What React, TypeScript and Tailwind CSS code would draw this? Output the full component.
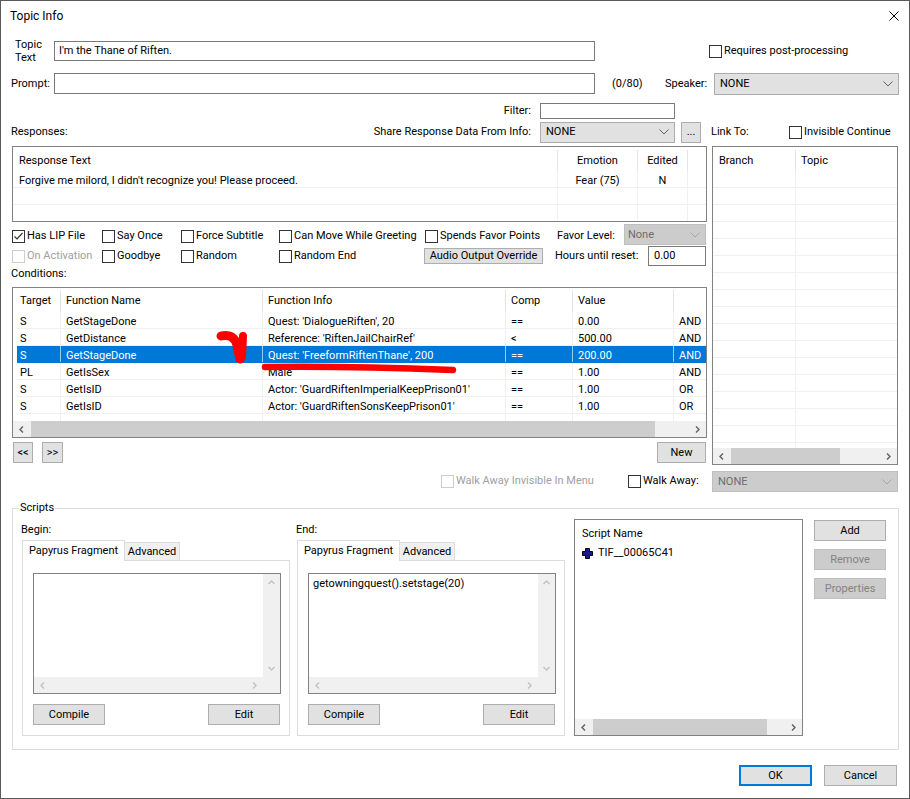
import React from 'react'

type Dir = 'up' | 'down' | 'left' | 'right'

function Arrow({ dir, color = '#606060' }: { dir: Dir; color?: string }) {
  const pts = {
    up: '1.5,6 4.5,3 7.5,6',
    down: '1.5,3 4.5,6 7.5,3',
    left: '6,1.5 3,4.5 6,7.5',
    right: '3,1.5 6,4.5 3,7.5',
  }[dir]
  return (
    <svg width="9" height="9" viewBox="0 0 9 9">
      <polyline points={pts} fill="none" stroke={color} strokeWidth="1.4" />
    </svg>
  )
}

function ComboArrow({ color }: { color: string }) {
  return (
    <svg width="10" height="6" viewBox="0 0 10 6" className="shrink-0">
      <polyline points="0.5,0.5 5,5 9.5,0.5" fill="none" stroke={color} strokeWidth="1" />
    </svg>
  )
}

function Check({ label, checked, disabled, className = '' }: { label: string; checked?: boolean; disabled?: boolean; className?: string }) {
  return (
    <div className={`flex items-center shrink-0 ${className}`}>
      <span
        className={`w-[13px] h-[13px] border bg-white flex items-center justify-center shrink-0 ${
          disabled ? 'border-[#cccccc]' : 'border-[#333333]'
        }`}
      >
        {checked && (
          <svg width="11" height="11" viewBox="0 0 11 11">
            <polyline points="1.5,5.5 4,8 9.5,2" fill="none" stroke="#333" strokeWidth="1.2" />
          </svg>
        )}
      </span>
      <span className={`ml-[2px] whitespace-nowrap ${disabled ? 'text-[#a0a0a0]' : ''}`}>{label}</span>
    </div>
  )
}

function Btn({ children, className = '', disabled, primary }: { children: React.ReactNode; className?: string; disabled?: boolean; primary?: boolean }) {
  const look = disabled
    ? 'border bg-[#cccccc] border-[#bfbfbf] text-[#838383]'
    : primary
    ? 'border-2 bg-[#e1e1e1] border-[#0078d7]'
    : 'border bg-[#e1e1e1] border-[#adadad]'
  return (
    <button type="button" className={`flex items-center justify-center shrink-0 whitespace-nowrap ${look} ${className}`}>
      {children}
    </button>
  )
}

function Combo({ value, className = '', disabled }: { value: string; className?: string; disabled?: boolean }) {
  return (
    <div
      className={`flex items-center border shrink-0 ${
        disabled ? 'bg-[#cccccc] border-[#bfbfbf] text-[#6d6d6d]' : 'bg-[#e1e1e1] border-[#adadad]'
      } ${className}`}
    >
      <span className="flex-1">{value}</span>
      <ComboArrow color={disabled ? '#a6a6a6' : '#606060'} />
    </div>
  )
}

function Field({ value = '', className = '' }: { value?: string; className?: string }) {
  return <div className={`flex items-center border border-[#7a7a7a] bg-white pl-[4px] shrink-0 ${className}`}>{value}</div>
}

function HScroll({ thumb, className = '', light }: { thumb?: string; className?: string; light?: boolean }) {
  const c = light ? '#c2c2c2' : '#606060'
  return (
    <div className={`flex h-[16px] bg-[#f0f0f0] shrink-0 ${className}`}>
      <div className="w-[17px] flex items-center justify-center">
        <Arrow dir="left" color={c} />
      </div>
      <div className="flex-1 flex">{thumb && <div className={`h-full bg-[#cdcdcd] ${thumb}`} />}</div>
      <div className="w-[17px] flex items-center justify-center">
        <Arrow dir="right" color={c} />
      </div>
    </div>
  )
}

function Plus() {
  return (
    <svg width="11" height="11" viewBox="0 0 11 11" className="shrink-0">
      <polygon
        points="3.5,0.5 7.5,0.5 7.5,3.5 10.5,3.5 10.5,7.5 7.5,7.5 7.5,10.5 3.5,10.5 3.5,7.5 0.5,7.5 0.5,3.5 3.5,3.5"
        fill="#1b1b86"
        stroke="#000"
        strokeWidth="1"
      />
    </svg>
  )
}

// script editor box with its (disabled) scroll bars
function ScriptBox({ text }: { text?: string }) {
  return (
    <div className="mt-[12px] ml-[10px] w-[248px] h-[121px] border border-[#828282] flex flex-col">
      <div className="flex-1 flex">
        <div className="flex-1 pl-[4px] pt-[3px] whitespace-nowrap">{text}</div>
        <div className="w-[17px] bg-[#f0f0f0] flex flex-col items-center justify-between py-[4px]">
          <Arrow dir="up" color="#c2c2c2" />
          <Arrow dir="down" color="#c2c2c2" />
        </div>
      </div>
      <div className="flex">
        <HScroll light className="flex-1" />
        <div className="w-[17px] h-[16px] bg-[#f0f0f0]" />
      </div>
    </div>
  )
}

function ScriptPanel({ label, text, className = '' }: { label: string; text?: string; className?: string }) {
  return (
    <div className={`w-[268px] shrink-0 ${className}`}>
      <div className="h-[21px] flex items-center -ml-[1px]">{label}</div>
      <div className="h-[20px] flex items-end">
        <div className="relative z-10 h-[21px] -mb-[1px] w-[103px] bg-white border border-b-0 border-[#dcdcdc] flex items-center justify-center pb-[1px]">
          Papyrus Fragment
        </div>
        <div className="h-[18px] w-[55px] bg-[#f0f0f0] border border-l-0 border-b-0 border-[#dcdcdc] flex items-center justify-center">
          Advanced
        </div>
      </div>
      <div className="h-[176px] border border-[#dcdcdc] bg-white">
        <ScriptBox text={text} />
        <div className="mt-[10px] pl-[10px] pr-[9px] flex justify-between">
          <Btn className="w-[72px] h-[21px]">Compile</Btn>
          <Btn className="w-[72px] h-[21px]">Edit</Btn>
        </div>
      </div>
    </div>
  )
}

const condCols = ['w-[44px] pl-[3px]', 'w-[202px] pl-[5px]', 'w-[243px] pl-[5px]', 'w-[67px] pl-[5px]', 'w-[101px] pl-[5px]', 'w-[32px] pl-[5px]']
const condHead = ['Target', 'Function Name', 'Function Info', 'Comp', 'Value', '']
const conditions = [
  ['S', 'GetStageDone', "Quest: 'DialogueRiften', 20", '==', '0.00', 'AND'],
  ['S', 'GetDistance', "Reference: 'RiftenJailChairRef'", '<', '500.00', 'AND'],
  ['S', 'GetStageDone', "Quest: 'FreeformRiftenThane', 200", '==', '200.00', 'AND'],
  ['PL', 'GetIsSex', 'Male', '==', '1.00', 'AND'],
  ['S', 'GetIsID', "Actor: 'GuardRiftenImperialKeepPrison01'", '==', '1.00', 'OR'],
  ['S', 'GetIsID', "Actor: 'GuardRiftenSonsKeepPrison01'", '==', '1.00', 'OR'],
]

export default function App() {
  return (
    <div className="w-[910px] h-[799px] bg-white relative overflow-hidden shadow-[inset_0_0_0_1px_#5a5a5a] font-[Roboto,sans-serif] text-[11px] leading-[14px] text-black select-none">
      {/* Title bar */}
      <div className="h-[31px] flex items-center pl-[10px]">
        <span className="text-[12px]">Topic Info</span>
        <svg className="ml-auto mr-[11px]" width="10" height="10" viewBox="0 0 10 10">
          <path d="M0.5 0.5 L9.5 9.5 M9.5 0.5 L0.5 9.5" stroke="#000" strokeWidth="1" />
        </svg>
      </div>

      {/* Topic text */}
      <div className="mt-[7px] h-[26px] flex items-center">
        <div className="ml-[15px] w-[39px] leading-[13px]">
          Topic
          <br />
          Text
        </div>
        <Field className="w-[541px] h-[20px]" value="I'm the Thane of Riften." />
        <Check className="ml-[114px]" label="Requires post-processing" />
      </div>

      {/* Prompt */}
      <div className="mt-[8px] h-[23px] flex items-center">
        <div className="ml-[11px] w-[43px]">Prompt:</div>
        <Field className="w-[541px] h-[21px]" />
        <div className="ml-[17px] w-[53px]">(0/80)</div>
        <div className="w-[49px]">Speaker:</div>
        <Combo className="w-[185px] h-[22px] pl-[5px] pr-[5px]" value="NONE" />
      </div>

      {/* Filter */}
      <div className="mt-[7px] h-[18px] flex items-center">
        <div className="w-[540px] pr-[9px] text-right">Filter:</div>
        <Field className="w-[135px] h-[16px]" />
      </div>

      {/* Responses header row */}
      <div className="mt-[1px] h-[22px] flex items-center">
        <div className="w-[540px] pl-[11px] pr-[9px] flex justify-between">
          <span>Responses:</span>
          <span>Share Response Data From Info:</span>
        </div>
        <Combo className="w-[135px] h-[21px] pl-[5px] pr-[5px]" value="NONE" />
        <Btn className="ml-[6px] w-[20px] h-[21px]">...</Btn>
        <div className="ml-[10px] w-[78px]">Link To:</div>
        <Check label="Invisible Continue" />
      </div>

      {/* Main area */}
      <div className="mt-[3px] pl-[12px] flex items-start">
        <div className="w-[695px] shrink-0">
          {/* Responses list */}
          <div className="h-[76px] border border-[#828282] overflow-hidden">
            <div className="h-[24px] flex pt-[3px]">
              <div className="w-[545px] pl-[6px] flex items-center border-r border-[#e5e5e5]">Response Text</div>
              <div className="w-[80px] flex items-center justify-center border-r border-[#e5e5e5]">Emotion</div>
              <div className="w-[50px] flex items-center justify-center border-r border-[#e5e5e5]">Edited</div>
            </div>
            {[0, 1, 2].map((i) => (
              <div key={i} className="h-[17px] flex border-b border-[#f0f0f0]">
                <div className="w-[545px] pl-[6px] pt-[4px] flex items-center border-r border-[#f0f0f0] whitespace-nowrap">
                  {i === 0 ? "Forgive me milord, I didn't recognize you! Please proceed." : ''}
                </div>
                <div className="w-[80px] pt-[4px] flex items-center justify-center border-r border-[#f0f0f0]">{i === 0 ? 'Fear (75)' : ''}</div>
                <div className="w-[50px] pt-[4px] flex items-center justify-center border-r border-[#f0f0f0]">{i === 0 ? 'N' : ''}</div>
              </div>
            ))}
          </div>

          {/* Flags */}
          <div className="mt-[4px] h-[20px] flex items-center">
            <Check className="w-[90px]" label="Has LIP File" checked />
            <Check className="w-[79px]" label="Say Once" />
            <Check className="w-[98px]" label="Force Subtitle" />
            <Check className="w-[146px]" label="Can Move While Greeting" />
            <Check className="w-[132px]" label="Spends Favor Points" />
            <div className="w-[67px]">Favor Level:</div>
            <Combo disabled className="w-[82px] h-[21px] pl-[3px] pr-[5px] -mt-[3px]" value="None" />
          </div>
          <div className="h-[20px] flex items-center">
            <Check className="w-[90px]" label="On Activation" disabled />
            <Check className="w-[79px]" label="Goodbye" />
            <Check className="w-[98px]" label="Random" />
            <Check className="w-[145px]" label="Random End" />
            <Btn className="w-[119px] h-[16px] leading-[12px]">Audio Output Override</Btn>
            <div className="ml-[12px] w-[93px]">Hours until reset:</div>
            <Field className="w-[58px] h-[20px] pl-[5px]" value="0.00" />
          </div>

          <div className="h-[16px] flex items-center -ml-[1px]">Conditions:</div>

          {/* Conditions list */}
          <div className="mt-[5px] h-[151px] border border-[#828282] flex flex-col overflow-hidden">
            <div className="h-[24px] flex pl-[4px] pt-[2px] shrink-0">
              {condHead.map((h, i) => (
                <div key={i} className={`${condCols[i]} flex items-center whitespace-nowrap ${i < 5 ? 'border-r border-[#e5e5e5]' : ''}`}>
                  {h}
                </div>
              ))}
            </div>
            {conditions.map((row, r) => {
              const sel = r === 2
              return (
                <div key={r} className="h-[17px] flex pl-[4px] shrink-0">
                  <div className={`flex flex-1 border-b ${sel ? 'bg-[#0078d7] text-white border-[#0078d7]' : 'border-[#f0f0f0]'}`}>
                    {row.map((c, i) => (
                      <div
                        key={i}
                        className={`${condCols[i]} pt-[4px] flex items-center whitespace-nowrap overflow-hidden ${
                          i < 5 ? (sel ? 'border-r border-[#9ccbf0]' : 'border-r border-[#f0f0f0]') : ''
                        }`}
                      >
                        {c}
                      </div>
                    ))}
                  </div>
                </div>
              )
            })}
            <div className="flex-1 flex pl-[4px]">
              {condCols.slice(0, 5).map((c, i) => (
                <div key={i} className={`${c} border-r border-[#f0f0f0]`} />
              ))}
            </div>
            <HScroll thumb="ml-[1px] w-[624px]" />
          </div>

          {/* Move / New buttons */}
          <div className="mt-[4px] h-[21px] flex items-center">
            <Btn className="ml-[1px] w-[20px] h-[21px]">&lt;&lt;</Btn>
            <Btn className="ml-[9px] w-[21px] h-[21px]">&gt;&gt;</Btn>
            <Btn className="ml-auto mr-[1px] w-[49px] h-[21px]">New</Btn>
          </div>

          {/* Walk away */}
          <div className="mt-[8px] h-[20px] flex items-center">
            <Check className="ml-[429px] w-[187px]" label="Walk Away Invisible In Menu" disabled />
            <Check label="Walk Away:" />
          </div>
        </div>

        <div className="ml-[5px] w-[186px] shrink-0">
          {/* Link To list */}
          <div className="h-[319px] border border-[#828282] flex flex-col overflow-hidden">
            <div className="h-[24px] flex pt-[3px] shrink-0">
              <div className="w-[83px] pl-[6px] flex items-center border-r border-[#e5e5e5]">Branch</div>
              <div className="pl-[5px] flex items-center">Topic</div>
            </div>
            <div className="flex-1 overflow-hidden">
              {Array.from({ length: 17 }).map((_, i) => (
                <div key={i} className="h-[17px] flex border-b border-[#f0f0f0]">
                  <div className="w-[83px] border-r border-[#f0f0f0]" />
                </div>
              ))}
            </div>
            <HScroll thumb="ml-[1px] w-[109px]" />
          </div>
          <Combo disabled className="mt-[6px] w-[186px] h-[21px] pl-[5px] pr-[5px]" value="NONE" />
        </div>
      </div>

      {/* Scripts group */}
      <fieldset className="mt-[9px] ml-[12px] w-[887px] border border-[#dcdcdc] pl-[9px] pt-[4px] pb-[13px]">
        <legend className="ml-[-3px] px-[1px] leading-[14px]">Scripts</legend>
        <div className="flex items-start">
          <ScriptPanel label="Begin:" />
          <ScriptPanel label="End:" text="getowningquest().setstage(20)" className="ml-[7px]" />

          <div className="ml-[9px] w-[229px] h-[217px] border border-[#828282] flex flex-col shrink-0">
            <div className="h-[24px] pl-[7px] pt-[3px] flex items-center shrink-0">Script Name</div>
            <div className="h-[17px] pl-[7px] pt-[1px] flex items-center">
              <Plus />
              <span className="ml-[5px]">TIF__00065C41</span>
            </div>
            <div className="flex-1" />
            <HScroll thumb="ml-[1px] w-[174px]" />
          </div>

          <div className="ml-[11px] w-[72px] flex flex-col shrink-0">
            <Btn className="mt-[1px] h-[21px]">Add</Btn>
            <Btn disabled className="mt-[8px] h-[21px]">Remove</Btn>
            <Btn disabled className="mt-[8px] h-[21px]">Properties</Btn>
          </div>
        </div>
      </fieldset>

      {/* OK / Cancel */}
      <div className="mt-[15px] flex justify-end pr-[13px]">
        <Btn primary className="w-[73px] h-[21px]">OK</Btn>
        <Btn className="ml-[12px] w-[73px] h-[21px]">Cancel</Btn>
      </div>

      {/* red hand-drawn annotation */}
      <svg className="absolute left-0 top-0 pointer-events-none" width="910" height="799" viewBox="0 0 910 799">
        <path d="M221 336 C229 334 235 337 237 345 L240 359" fill="none" stroke="#fe0000" strokeWidth="9" strokeLinecap="round" />
        <path d="M243 336 L242 357" fill="none" stroke="#fe0000" strokeWidth="8" strokeLinecap="round" />
        <path d="M265 367 C330 366 400 368 453 370" fill="none" stroke="#fe0000" strokeWidth="6.5" strokeLinecap="round" />
      </svg>
    </div>
  )
}
